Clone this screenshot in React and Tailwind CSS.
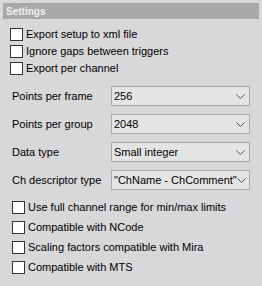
const topChecks = ['Export setup to xml file', 'Ignore gaps between triggers', 'Export per channel'];

const fields = [
  { label: 'Points per frame', value: '256' },
  { label: 'Points per group', value: '2048' },
  { label: 'Data type', value: 'Small integer' },
  { label: 'Ch descriptor type', value: '"ChName - ChComment"' },
];

const bottomChecks = [
  'Use full channel range for min/max limits',
  'Compatible with NCode',
  'Scaling factors compatible with Mira',
  'Compatible with MTS',
];

const Box = () => (
  <span className="w-[13px] h-[13px] shrink-0 border border-[#333] bg-white" />
);

const Chevron = () => (
  <svg width="9" height="5" viewBox="0 0 9 5" className="shrink-0">
    <path d="M0.5 0.5 L4.5 4.5 L8.5 0.5" fill="none" stroke="#555" strokeWidth="1" />
  </svg>
);

export default function App() {
  return (
    <div
      className="w-[262px] h-[286px] bg-[#d8d7d9] pt-[3px] px-[3px] text-[11px] text-black overflow-hidden"
      style={{ fontFamily: '"Liberation Sans", Arial, sans-serif' }}
    >
      {/* header */}
      <div className="h-[16px] bg-[#a9a9a9] text-[#f0f0f0] font-bold text-[10px] pl-[3px] flex items-center">
        Settings
      </div>

      <div className="mt-[7px] pl-[7px]">
        {topChecks.map((t) => (
          <div key={t} className="h-[17px] flex items-center gap-[3px]">
            <Box />
            <span className="leading-none">{t}</span>
          </div>
        ))}
      </div>

      <div className="mt-[9px] flex flex-col gap-[8px]">
        {fields.map((f) => (
          <div key={f.label} className="h-[20px] flex items-center">
            <span className="w-[108px] pl-[9px] leading-none">{f.label}</span>
            <div className="w-[139px] h-[20px] bg-[#e4e4e4] border border-[#a8a8a8] flex items-center justify-between pl-[2px] pr-[4px]">
              <span className="leading-none whitespace-nowrap">{f.value}</span>
              <Chevron />
            </div>
          </div>
        ))}
      </div>

      <div className="mt-[7px] pl-[9px]">
        {bottomChecks.map((t) => (
          <div key={t} className="h-[20px] flex items-center gap-[3px]">
            <Box />
            <span className="leading-none">{t}</span>
          </div>
        ))}
      </div>
    </div>
  );
}
